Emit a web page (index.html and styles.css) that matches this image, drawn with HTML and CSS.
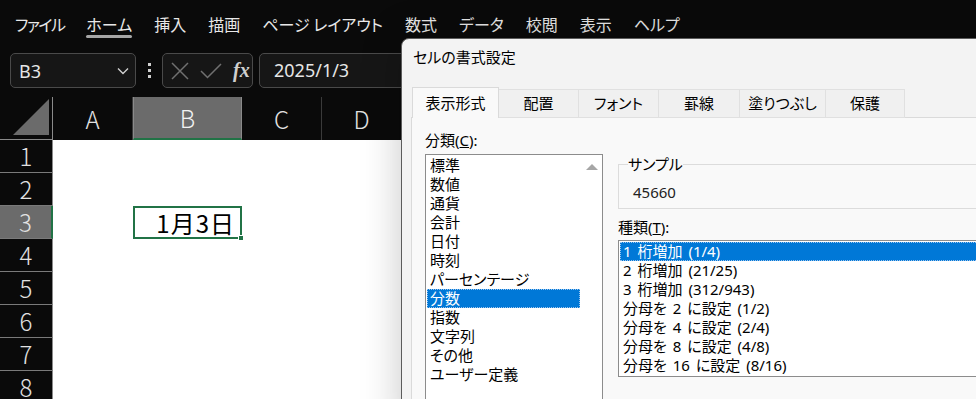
FILE: index.html
```html
<!DOCTYPE html>
<html lang="ja">
<head>
  <meta charset="UTF-8">
  <meta name="viewport" content="width=device-width, initial-scale=1.0">
  <title>セルの書式設定</title>
  <link rel="stylesheet" href="styles.css">
</head>
<body>
  <nav class="menu">
    <span class="menu-item narrow">ファイル</span>
    <span class="menu-item active">ホーム</span>
    <span class="menu-item">挿入</span>
    <span class="menu-item">描画</span>
    <span class="menu-item">ページ レイアウト</span>
    <span class="menu-item">数式</span>
    <span class="menu-item">データ</span>
    <span class="menu-item">校閲</span>
    <span class="menu-item">表示</span>
    <span class="menu-item">ヘルプ</span>
  </nav>

  <div class="formula-bar">
    <div class="name-box">
      <span>B3</span>
      <svg width="12" height="8" viewBox="0 0 12 8"><path d="M1 1.5 L6 6.5 L11 1.5" fill="none" stroke="#d0d0d0" stroke-width="1.4"/></svg>
    </div>
    <div class="kebab"><i></i><i></i><i></i></div>
    <div class="fx-tools">
      <svg width="18" height="18" viewBox="0 0 18 18"><path d="M1 1 L17 17 M17 1 L1 17" stroke="#707070" stroke-width="1.5"/></svg>
      <svg width="22" height="16" viewBox="0 0 22 16"><path d="M1 8 L7.5 14.5 L21 1" fill="none" stroke="#707070" stroke-width="1.5"/></svg>
      <span class="fx">fx</span>
    </div>
    <div class="formula-input">2025/1/3</div>
  </div>

  <div class="sheet">
    <div class="corner">
      <svg width="38" height="38" viewBox="0 0 38 38"><path d="M1 37 L37 1 L37 37 Z" fill="#6b6b6b"/></svg>
    </div>
    <div class="col-head">A</div>
    <div class="col-head selected">B</div>
    <div class="col-head">C</div>
    <div class="col-head">D</div>
    <div class="col-head last"></div>

    <div class="row-head">1</div>
    <div class="row-head">2</div>
    <div class="row-head selected">3</div>
    <div class="row-head">4</div>
    <div class="row-head">5</div>
    <div class="row-head">6</div>
    <div class="row-head">7</div>
    <div class="row-head">8</div>

    <div class="cells"></div>
    <div class="active-cell">1月3日<span class="fill-handle"></span></div>
  </div>

  <div class="dialog">
    <div class="dialog-title">セルの書式設定</div>
    <div class="tabs">
      <div class="tab active" style="width: 87px">表示形式</div>
      <div class="tab" style="width: 80px">配置</div>
      <div class="tab" style="width: 80px">フォント</div>
      <div class="tab" style="width: 81px">罫線</div>
      <div class="tab" style="width: 86px">塗りつぶし</div>
      <div class="tab" style="width: 79px">保護</div>
    </div>
    <div class="panel">
      <div class="category-col">
        <div class="field-label">分類(<u>C</u>):</div>
        <div class="listbox category-list">
          <ul class="items">
            <li>標準</li>
            <li>数値</li>
            <li>通貨</li>
            <li>会計</li>
            <li>日付</li>
            <li>時刻</li>
            <li>パーセンテージ</li>
            <li class="selected">分数</li>
            <li>指数</li>
            <li>文字列</li>
            <li>その他</li>
            <li>ユーザー定義</li>
          </ul>
          <div class="scrollbar">
            <svg width="12" height="8" viewBox="0 0 12 8"><path d="M0 7 L6 1 L12 7 Z" fill="#a6a6a6"/></svg>
          </div>
        </div>
      </div>
      <div class="detail-col">
        <fieldset class="sample">
          <legend>サンプル</legend>
          <div class="sample-value">45660</div>
        </fieldset>
        <div class="field-label type-label">種類(<u>T</u>):</div>
        <div class="listbox type-list">
          <ul class="items">
            <li class="selected">1 桁増加 (1/4)</li>
            <li>2 桁増加 (21/25)</li>
            <li>3 桁増加 (312/943)</li>
            <li>分母を 2 に設定 (1/2)</li>
            <li>分母を 4 に設定 (2/4)</li>
            <li>分母を 8 に設定 (4/8)</li>
            <li>分母を 16 に設定 (8/16)</li>
          </ul>
        </div>
      </div>
    </div>
  </div>
</body>
</html>
```

FILE: styles.css
```css
* {
  box-sizing: border-box;
}

html, body {
  margin: 0;
}

body {
  position: relative;
  width: 976px;
  height: 399px;
  overflow: hidden;
  background-color: #0a0a0a;
  font-family: "Noto Sans CJK JP", "Noto Sans", sans-serif;
}

/* top ribbon tabs */
.menu {
  display: flex;
  align-items: center;
  gap: 22px;
  height: 48px;
  padding-left: 15px;
  color: #e8e8e8;
  font-size: 16px;
  font-feature-settings: "palt";
}

.menu-item {
  position: relative;
  line-height: 22px;
}

.menu-item.narrow {
  letter-spacing: -1.5px;
}

.menu-item.active::after {
  content: "";
  position: absolute;
  left: 0;
  right: 0;
  bottom: -3px;
  height: 3px;
  border-radius: 2px;
  background-color: #a6a6a6;
}

/* formula bar */
.formula-bar {
  display: flex;
  align-items: center;
  height: 35px;
  margin: 5px 0 9px;
  padding-left: 10px;
  font-family: "Noto Sans", sans-serif;
  font-size: 18px;
  color: #e6e6e6;
}

.name-box {
  display: flex;
  align-items: center;
  justify-content: space-between;
  width: 126px;
  height: 35px;
  padding: 0 6px 0 8px;
  border: 1px solid #4a4a4a;
  border-radius: 5px;
  background-color: #161616;
}

.kebab {
  display: flex;
  flex-direction: column;
  align-items: center;
  gap: 3px;
  width: 26px;
}

.kebab i {
  width: 3px;
  height: 3px;
  background-color: #cfcfcf;
}

.fx-tools {
  display: flex;
  align-items: center;
  gap: 11px;
  width: 91px;
  height: 35px;
  padding-left: 8px;
  border: 1px solid #4a4a4a;
  border-radius: 5px;
  background-color: #161616;
}

.fx {
  font-family: "Liberation Serif", serif;
  font-style: italic;
  font-weight: bold;
  font-size: 20px;
  color: #cfcfcf;
}

.formula-input {
  flex: 1;
  height: 35px;
  margin-left: 6px;
  padding-left: 14px;
  line-height: 33px;
  border: 1px solid #4a4a4a;
  border-radius: 5px;
  background-color: #161616;
}

/* grid */
.sheet {
  display: grid;
  grid-template-columns: 53px 80px 109px 80px 80px 1fr;
  grid-template-rows: 43px repeat(8, 33px);
  color: #e2e2e2;
  font-size: 24px;
  font-weight: 300;
}

.corner {
  display: flex;
  align-items: flex-end;
  justify-content: flex-end;
  padding: 0 2px 3px 0;
  border-right: 1px solid #8a8a8a;
  border-bottom: 1px solid #8a8a8a;
}

.col-head {
  display: flex;
  align-items: center;
  justify-content: center;
  border-right: 1px solid #3a3a3a;
}

.col-head.selected {
  background-color: #6b6b6b;
  border-left: 1px solid #8a8a8a;
  border-right: 1px solid #8a8a8a;
  border-bottom: 2px solid #217346;
  color: #f2f2f2;
}

.col-head.last {
  border-right: none;
}

.row-head {
  grid-column: 1;
  display: flex;
  align-items: center;
  justify-content: center;
  line-height: 1;
  border-bottom: 1px solid #7a7a7a;
  border-right: 1px solid #8a8a8a;
}

.row-head.selected {
  background-color: #6b6b6b;
  border-right: 2px solid #217346;
}

.cells {
  grid-column: 2 / -1;
  grid-row: 2 / -1;
  background-color: #fff;
}

.active-cell {
  position: relative;
  grid-column: 3;
  grid-row: 4;
  display: flex;
  align-items: center;
  justify-content: flex-end;
  padding-right: 5px;
  border: 2px solid #217346;
  color: #000;
  font-size: 24px;
  font-weight: 400;
  letter-spacing: 1px;
}

.fill-handle {
  position: absolute;
  right: -4px;
  bottom: -4px;
  width: 6px;
  height: 6px;
  background-color: #217346;
  border: 1px solid #fff;
}

/* format cells dialog */
.dialog {
  position: absolute;
  left: 401px;
  top: 38px;
  width: 640px;
  height: 400px;
  background-color: #f3f3f3;
  border: 1px solid #5c5c5c;
  border-radius: 8px 8px 0 0;
  box-shadow: 0 0 40px rgba(0, 0, 0, 0.22);
  color: #000;
  font-family: "Noto Sans", "Noto Sans CJK JP", sans-serif;
  font-size: 15px;
  font-feature-settings: "palt";
}

.dialog-title {
  height: 48px;
  padding: 8px 0 0 11px;
  line-height: 20px;
}

.tabs {
  position: relative;
  z-index: 1;
  display: flex;
  align-items: flex-end;
  height: 31px;
  margin-bottom: -1px;
  padding-left: 10px;
}

.tab {
  height: 29px;
  line-height: 27px;
  text-align: center;
  background-color: #f0f0f0;
  border: 1px solid #e0e0e0;
  border-left: none;
}

.tab.active {
  height: 31px;
  line-height: 30px;
  background-color: #f9f9f9;
  border: 1px solid #dadada;
  border-bottom: none;
}

.panel {
  display: flex;
  gap: 15px;
  height: 320px;
  margin-left: 9px;
  padding: 13px 0 0 13px;
  border: 1px solid #dadada;
  background-color: #f9f9f9;
}

.field-label {
  height: 19px;
  line-height: 19px;
  margin-bottom: 4px;
}

.category-col {
  width: 178px;
}

.detail-col {
  width: 420px;
}

.listbox {
  border: 1px solid #8c8c8c;
  background-color: #fff;
}

.items {
  list-style: none;
  margin: 0;
  padding: 1px;
}

.items li {
  height: 19px;
  line-height: 19px;
  padding-left: 3px;
  white-space: nowrap;
}

.items li.selected {
  background-color: #0078d7;
  color: #fff;
  outline: 1px dotted #9cc4ee;
  outline-offset: -1px;
}

.category-list {
  display: flex;
  height: 260px;
}

.category-list .items {
  flex: 1;
}

.scrollbar {
  display: flex;
  justify-content: center;
  width: 21px;
  padding-top: 8px;
}

.sample {
  margin: 24px 0 0;
  padding: 9px 9px 6px;
  border: 1px solid #dcdcdc;
}

.sample legend {
  padding: 0;
  line-height: 19px;
}

.sample-value {
  line-height: 19px;
  padding-left: 5px;
  color: #222;
}

.type-label {
  margin-top: 9px;
  margin-bottom: 3px;
}

.type-list {
  height: 137px;
  word-spacing: 2px;
}
```
